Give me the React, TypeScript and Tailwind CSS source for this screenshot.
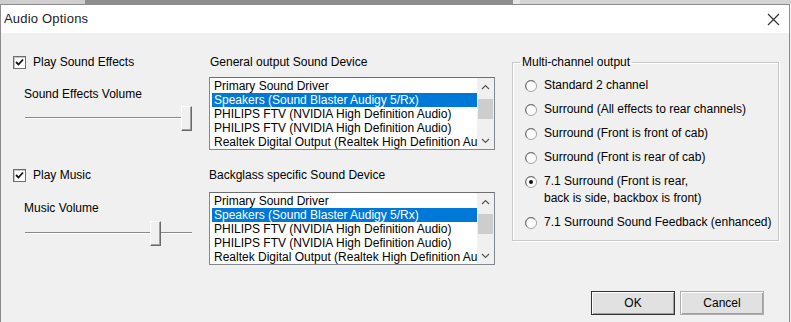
import { ReactNode } from "react";

const devices = [
  "Primary Sound Driver",
  "Speakers (Sound Blaster Audigy 5/Rx)",
  "PHILIPS FTV (NVIDIA High Definition Audio)",
  "PHILIPS FTV (NVIDIA High Definition Audio)",
  "Realtek Digital Output (Realtek High Definition Audio)",
];

const channels = [
  { label: "Standard 2 channel" },
  { label: "Surround (All effects to rear channels)" },
  { label: "Surround (Front is front of cab)" },
  { label: "Surround (Front is rear of cab)" },
  { label: "7.1 Surround (Front is rear,\nback is side, backbox is front)", checked: true },
  { label: "7.1 Surround Sound Feedback (enhanced)" },
];

const Checkbox = ({ label }: { label: string }) => (
  <div className="flex h-[14px] items-center gap-[7px]">
    <div className="flex h-[13px] w-[13px] items-center justify-center border border-[#6d6d6d] bg-white shadow-[inset_1px_1px_0_#c8c8c8]">
      <svg width="9" height="9" viewBox="0 0 9 9">
        <path d="M1 4 L3.5 6.5 L8 1.5" fill="none" stroke="#111" strokeWidth="1.8" />
      </svg>
    </div>
    <span>{label}</span>
  </div>
);

// trackbar with a plain rectangular thumb
const Slider = ({ pos }: { pos: number }) => (
  <div className="relative h-[26px] w-[168px]">
    <div className="absolute left-[1px] right-0 top-[11px] h-[2px] border-t border-[#8a8a8a] bg-white" />
    <div
      className="absolute top-0 h-[25px] w-[11px] border-b border-r border-[#6a6a6a] border-l border-t border-l-white border-t-white bg-[#f0f0f0] shadow-[inset_-1px_-1px_0_#a0a0a0]"
      style={{ left: pos }}
    />
  </div>
);

const Arrow = ({ up }: { up?: boolean }) => (
  <div className="flex h-[17px] items-center justify-center">
    <svg width="9" height="6" viewBox="0 0 9 6">
      <path d={up ? "M1 5 L4.5 1.5 L8 5" : "M1 1 L4.5 4.5 L8 1"} fill="none" stroke="#555" strokeWidth="1.2" />
    </svg>
  </div>
);

const ListBox = () => (
  <div className="flex h-[73px] w-[286px] overflow-hidden border border-[#828790] border-t-[#6f6f6f] bg-white">
    <div className="flex-1 overflow-hidden pl-[2px] pt-[1px]">
      {devices.map((d, i) => (
        <div
          key={i}
          className={`h-[14px] whitespace-nowrap pl-[2px] leading-[14px] ${i === 1 ? "bg-[#0078d7] text-white" : ""}`}
        >
          {d}
        </div>
      ))}
    </div>
    <div className="flex w-[17px] flex-col bg-[#f0f0f0]">
      <Arrow up />
      <div className="flex-1 pt-[4px]">
        <div className="mx-[1px] h-[20px] bg-[#cdcdcd]" />
      </div>
      <Arrow />
    </div>
  </div>
);

const Radio = ({ checked }: { checked?: boolean }) => (
  <svg width="12" height="12" viewBox="0 0 12 12" className="mt-[3px] shrink-0">
    <circle cx="6" cy="6" r="5.5" fill="#fff" stroke="#a0a0a0" />
    <path d="M2.2 9.8 A5 5 0 0 1 9.8 2.2" fill="none" stroke="#6a6a6a" strokeWidth="1" />
    {checked && <circle cx="6" cy="6" r="2" fill="#111" />}
  </svg>
);

const Button = ({ children, primary }: { children: ReactNode; primary?: boolean }) => (
  <div
    className={`flex h-[24px] w-[84px] items-center justify-center border bg-[#e1e1e1] ${
      primary ? "border-[#333]" : "border-[#adadad]"
    } shadow-[inset_1px_1px_0_#fff,inset_-1px_-1px_0_#a0a0a0]`}
  >
    {children}
  </div>
);

export default function App() {
  return (
    <div
      className="flex h-[322px] w-[791px] flex-col overflow-hidden bg-[#f0f0f0] text-[12px] leading-[14px] text-black"
      style={{ fontFamily: '"Liberation Sans", Arial, sans-serif' }}
    >
      {/* desktop behind the window */}
      <div className="flex h-[4px] shrink-0">
        <div className="w-[85px] bg-[#cfcfcf]" />
        <div className="w-[428px] bg-[#8e8e8e]" />
        <div className="w-[7px] bg-[#e6e6e6]" />
        <div className="flex-1 bg-[#d4d4d4]" />
      </div>

      <div className="mr-[1px] flex flex-1 flex-col border-l border-r border-t border-[#8c8c8c]">
        {/* title bar */}
        <div className="flex h-[28px] shrink-0 items-center justify-between bg-white pl-[3px] pr-[9px]">
          <span className="text-[13px] tracking-[0.2px] text-[#1b1b2b]">Audio Options</span>
          <svg width="13" height="13" viewBox="0 0 13 13">
            <path d="M1 1 L12 12 M12 1 L1 12" stroke="#333" strokeWidth="1.2" />
          </svg>
        </div>

        <div className="flex flex-1 pl-[12px] pt-[22px]">
          {/* left column */}
          <div className="flex w-[196px] flex-col">
            <Checkbox label="Play Sound Effects" />
            <div className="ml-[11px] mt-[18px]">Sound Effects Volume</div>
            <div className="ml-[11px] mt-[5px]">
              <Slider pos={157} />
            </div>
            <div className="mt-[36px]">
              <Checkbox label="Play Music" />
            </div>
            <div className="ml-[11px] mt-[19px]">Music Volume</div>
            <div className="ml-[11px] mt-[6px]">
              <Slider pos={126} />
            </div>
          </div>

          {/* middle column */}
          <div className="flex w-[303px] flex-col">
            <div className="ml-[1px]">General output Sound Device</div>
            <div className="mt-[8px]">
              <ListBox />
            </div>
            <div className="mt-[18px]">Backglass specific Sound Device</div>
            <div className="mt-[10px]">
              <ListBox />
            </div>
          </div>

          {/* right column */}
          <div className="flex w-[267px] flex-col">
            <fieldset className="h-[186px] border border-[#c8c8c8] pl-[12px] pt-[8px] shadow-[1px_1px_0_#fff,inset_1px_1px_0_#fff]">
              <legend className="-ml-[5px] px-[2px] leading-[14px]">Multi-channel output</legend>
              <div className="flex flex-col gap-[7px]">
                {channels.map((c, i) => (
                  <div key={i} className="flex gap-[7px] leading-[17px]">
                    <Radio checked={c.checked} />
                    <span className="whitespace-pre">{c.label}</span>
                  </div>
                ))}
              </div>
            </fieldset>
            <div className="mt-[50px] flex justify-end gap-[5px] pr-[15px]">
              <Button primary>OK</Button>
              <Button>Cancel</Button>
            </div>
          </div>
        </div>
      </div>
    </div>
  );
}
